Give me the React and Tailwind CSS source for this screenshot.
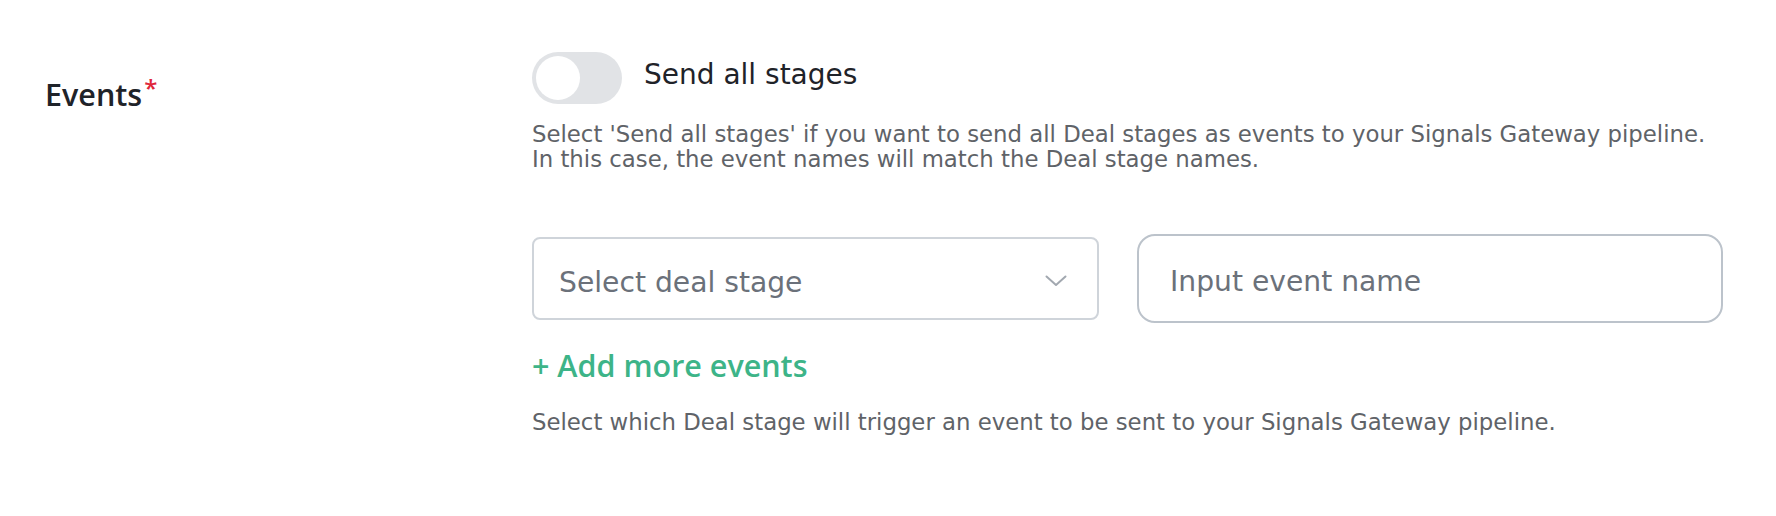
import React, { useState } from 'react';

const body = { fontFamily: '"DejaVu Sans", "Open Sans", sans-serif' };
const strong = { fontFamily: '"Open Sans", "Liberation Sans", sans-serif' };

const Chevron = () => (
  <svg width="22" height="12" viewBox="0 0 22 12" fill="none" className="shrink-0 mt-[4px]">
    <path d="M1.5 1.5 L11 10 L20.5 1.5" stroke="#a2a8b0" strokeWidth="2" strokeLinecap="round" strokeLinejoin="round" />
  </svg>
);

const App = () => {
  const [sendAll, setSendAll] = useState(false);

  return (
    <div className="w-full h-[516px] bg-white" style={body}>
      <div className="grid grid-cols-[487px_1fr] pl-[45px] pt-[52px]">
        {/* Label */}
        <div className="pt-[24px]">
          <span className="text-[30.5px] leading-[36px] font-semibold text-[#1f2329]" style={strong}>
            Events
            <span className="text-[#e0263a] text-[24px] align-top relative top-[-6px] ml-[2px]">*</span>
          </span>
        </div>

        {/* Field */}
        <div className="flex flex-col">
          <div className="flex items-center gap-[22px]">
            <button
              onClick={() => setSendAll(!sendAll)}
              className={`w-[90px] h-[52px] rounded-full p-[4px] flex items-center ${sendAll ? 'bg-[#3db488] justify-end' : 'bg-[#e1e3e6] justify-start'}`}
            >
              <span className="w-[44px] h-[44px] rounded-full bg-white" />
            </button>
            <span className="text-[28px] leading-[34px] text-[#1f2329] -mt-[6px]">Send all stages</span>
          </div>

          <p className="mt-[18px] text-[22.8px] leading-[25px] text-[#5f6368]">
            Select 'Send all stages' if you want to send all Deal stages as events to your Signals Gateway pipeline.
            <br />
            In this case, the event names will match the Deal stage names.
          </p>

          <div className="mt-[62px] flex items-center gap-[38px]">
            <div className="w-[567px] h-[83px] border-2 border-[#cfd4da] rounded-[8px] pl-[25px] pr-[30px] flex items-center justify-between">
              <span className="text-[28.2px] leading-[34px] pt-[8px] text-[#6b717a]">Select deal stage</span>
              <Chevron />
            </div>
            <div className="w-[586px] h-[89px] border-2 border-[#bcc3cb] rounded-[18px] pl-[31px] flex items-center">
              <span className="text-[28.2px] leading-[34px] pt-[6px] text-[#6b717a]">Input event name</span>
            </div>
          </div>

          <button className="mt-[24px] self-start text-[30.5px] leading-[36px] font-semibold text-[#3db488]" style={strong}>
            + Add more events
          </button>

          <p className="mt-[27px] text-[22.8px] leading-[25px] text-[#5f6368]">
            Select which Deal stage will trigger an event to be sent to your Signals Gateway pipeline.
          </p>
        </div>
      </div>
    </div>
  );
};

export default App;
